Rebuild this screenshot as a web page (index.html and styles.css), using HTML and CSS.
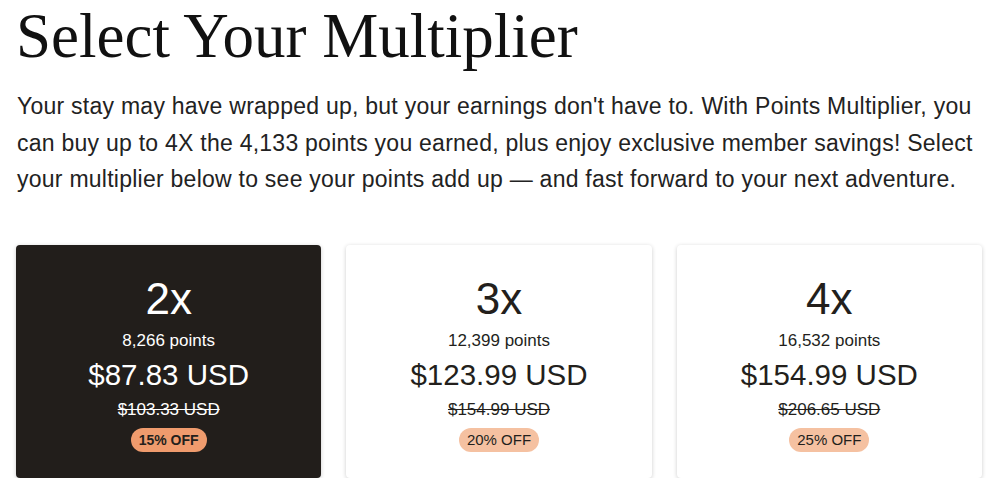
FILE: index.html
```html
<!DOCTYPE html>
<html lang="en">
<head>
<meta charset="utf-8">
<title>Select Your Multiplier</title>
<link rel="stylesheet" href="styles.css">
</head>
<body>
<main class="page">
  <h1 class="title">Select Your Multiplier</h1>
  <p class="intro">Your stay may have wrapped up, but your earnings don't have to. With Points Multiplier, you can buy up to 4X the 4,133 points you earned, plus enjoy exclusive member savings! Select your multiplier below to see your points add up — and fast forward to your next adventure.</p>
  <div class="options">
    <div class="card card-selected">
      <div class="mult">2x</div>
      <div class="points">8,266 points</div>
      <div class="price">$87.83 USD</div>
      <div class="was">$103.33 USD</div>
      <span class="badge">15% OFF</span>
    </div>
    <div class="card">
      <div class="mult">3x</div>
      <div class="points">12,399 points</div>
      <div class="price">$123.99 USD</div>
      <div class="was">$154.99 USD</div>
      <span class="badge">20% OFF</span>
    </div>
    <div class="card">
      <div class="mult">4x</div>
      <div class="points">16,532 points</div>
      <div class="price">$154.99 USD</div>
      <div class="was">$206.65 USD</div>
      <span class="badge">25% OFF</span>
    </div>
  </div>
</main>
</body>
</html>
```

FILE: styles.css
```css
html, body {
  margin: 0;
  padding: 0;
  background: #ffffff;
}

.page {
  padding: 0 18px 0 16px;
}

.title {
  font-family: "Liberation Serif", "Times New Roman", serif;
  font-weight: 400;
  font-size: 63px;
  line-height: 72px;
  margin: 0;
  padding-top: 0;
  color: #111111;
}

.intro {
  font-family: "Liberation Sans", Arial, sans-serif;
  font-size: 23px;
  line-height: 36.5px;
  letter-spacing: 0.25px;
  color: #222222;
  margin: 16px 0 0 0;
  padding-left: 1px;
}

.options {
  display: grid;
  grid-template-columns: repeat(3, 1fr);
  gap: 25px;
  margin-top: 47px;
}

.card {
  background: #ffffff;
  border-radius: 4px;
  box-shadow: 0 1px 4px rgba(0, 0, 0, 0.2);
  display: flex;
  flex-direction: column;
  align-items: center;
  padding: 32px 0 26px;
  font-family: "Liberation Sans", Arial, sans-serif;
  color: #231f1c;
}

.card-selected {
  background: #221e1b;
  color: #ffffff;
}

.mult {
  font-size: 44px;
  line-height: 44px;
}

.points {
  font-size: 17px;
  line-height: 20px;
  margin-top: 10px;
}

.price {
  font-size: 29.5px;
  line-height: 33px;
  margin-top: 7px;
}

.was {
  font-size: 17px;
  line-height: 20px;
  margin-top: 9px;
  text-decoration: line-through;
}

.badge {
  display: inline-block;
  margin-top: 8px;
  height: 24px;
  line-height: 24px;
  padding: 0 8px;
  border-radius: 12px;
  background: #f5c1a1;
  color: #231f1c;
  font-size: 15px;
}

.card-selected .badge {
  background: #ef9b6d;
  font-size: 14px;
  font-weight: 700;
}
```
